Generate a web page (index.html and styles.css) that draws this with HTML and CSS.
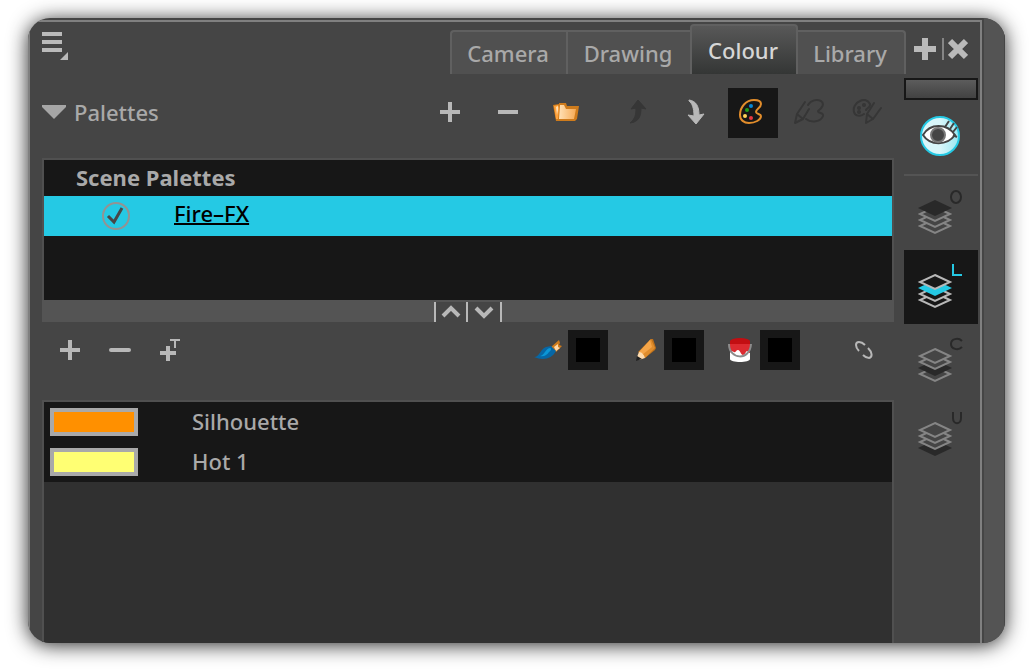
FILE: index.html
```html
<!DOCTYPE html>
<html lang="en">
<head>
  <meta charset="UTF-8">
  <meta name="viewport" content="width=device-width, initial-scale=1">
  <title>Colour</title>
  <link rel="stylesheet" href="styles.css">
</head>
<body>

<div class="window">
  <div class="dock">

    <header class="header">
      <button class="menu" aria-label="View menu">
        <svg width="26" height="28" viewBox="0 0 26 28"><path d="M0 0h20v4H0zM0 8h20v4H0zM0 16h20v4H0zM26 20v8h-8z" fill="#bababa"/></svg>
      </button>
      <nav class="tabs">
        <button class="tab">Camera</button>
        <button class="tab">Drawing</button>
        <button class="tab active">Colour</button>
        <button class="tab">Library</button>
      </nav>
      <div class="view-actions">
        <button aria-label="Add view">
          <svg width="22" height="22" viewBox="0 0 22 22"><path d="M11 0v22M0 11h22" stroke="#bababa" stroke-width="6"/></svg>
        </button>
        <button class="close" aria-label="Close view">
          <svg width="20" height="22" viewBox="0 0 20 22"><path d="M2 3l16 16M18 3L2 19" stroke="#bababa" stroke-width="6"/></svg>
        </button>
      </div>
    </header>

    <main class="main">
      <div class="toolbar">
        <button class="section-title">
          <svg width="24" height="14" viewBox="0 0 24 14"><path d="M0 0h24v2L12 14 0 2z" fill="#a6a6a6"/></svg>
          Palettes
        </button>
        <div class="tools">
          <button class="tool" aria-label="New palette">
            <svg width="22" height="22" viewBox="0 0 22 22"><path d="M11 1v20M1 11h20" stroke="#b8b8b8" stroke-width="4"/></svg>
          </button>
          <button class="tool" aria-label="Remove palette">
            <svg width="22" height="22" viewBox="0 0 22 22"><path d="M1 11h20" stroke="#b8b8b8" stroke-width="4"/></svg>
          </button>
          <button class="tool" aria-label="Palette list">
            <svg width="26" height="20" viewBox="0 0 26 20">
              <path d="M0 3l6-1v-1h7l1 3h12l-2 13-2 2H3z" fill="#ce7b1c"/>
              <path d="M1 4l4-1 1 3-1 11H3z" fill="#ffa33d"/>
              <path d="M3 5l2-1v4l-1 5z" fill="#ffe0b5"/>
              <path d="M7 3h4l2 4h10l-2 10H6z" fill="url(#folder)"/>
              <defs><linearGradient id="folder"><stop offset="0" stop-color="#ffe0b5"/><stop offset="1" stop-color="#f6aa55"/></linearGradient></defs>
            </svg>
          </button>
        </div>
        <div class="tools">
          <button class="tool" aria-label="Move up">
            <svg width="20" height="26" viewBox="0 0 20 26"><path d="M11 1l8 9-5-1c0 8-2 14-11 15 5-4 6-8 6-15l-5 1z" fill="#363636" stroke="#363636" stroke-linejoin="round"/></svg>
          </button>
          <button class="tool" aria-label="Move down">
            <svg width="20" height="26" viewBox="0 0 20 26"><path d="M4 1c7 1 10 6 10 15l5-1-8 10-8-9 6 1c0-8-2-13-5-15z" fill="#b8b8b8" stroke="#b8b8b8" stroke-linejoin="round"/></svg>
          </button>
          <button class="tool on" aria-label="Show palettes">
            <svg width="26" height="26" viewBox="0 0 26 26">
              <path d="M16 1C8 1 2 8 2 16c0 5 4 8 9 8 6 0 12-3 12-7 0-2-5-2-5-4 0-3 5-4 5-8 0-3-4-4-7-4z" fill="none" stroke="#e28d2b" stroke-width="2"/>
              <circle cx="13" cy="7" r="2" fill="#0788d8"/><circle cx="9" cy="11" r="2" fill="#219c18"/><circle cx="7" cy="17" r="2" fill="#ffd357"/><circle cx="13" cy="19" r="2" fill="#e8373f"/>
            </svg>
          </button>
          <button class="tool faded" aria-label="Edit palette">
            <svg width="32" height="26" viewBox="0 0 32 26">
              <path d="M12 3L4 15 2 24l8-4 6-10M4 15l6 5"/>
              <path d="M15 6c3-5 9-6 13-4 4 3 1 7-3 10 0 3 6 1 5 5-2 6-12 7-17 3"/>
            </svg>
          </button>
          <button class="tool faded" aria-label="Paint palette">
            <svg width="30" height="26" viewBox="0 0 30 26">
              <path d="M18 5c-2-4-6-5-10-3C3 4 1 9 2 13c1 4 6 5 10 2M18 5c1 3-3 4-4 6"/>
              <path d="M22 4l-7 11-1 9 7-4 8-11M15 15l6 5"/>
              <circle cx="7" cy="9" r="1"/><circle cx="12" cy="6" r="1"/><circle cx="7" cy="13" r="1"/>
            </svg>
          </button>
        </div>
      </div>

      <section class="palettes">
        <h2>Scene Palettes</h2>
        <label class="palette">
          <span class="check">
            <input type="checkbox" checked>
            <svg width="28" height="28" viewBox="0 0 28 28"><path d="M6 14l6 6 8-14" fill="none" stroke="#474747" stroke-width="3"/></svg>
          </span>
          <span class="palette-name">Fire–FX</span>
        </label>
      </section>

      <div class="splitter">
        <button aria-label="Collapse up"><svg width="20" height="20" viewBox="0 0 20 20"><path d="M2 14l8-8 8 8" fill="none" stroke="#b8b8b8" stroke-width="4"/></svg></button>
        <button aria-label="Collapse down"><svg width="20" height="20" viewBox="0 0 20 20"><path d="M2 6l8 8 8-8" fill="none" stroke="#b8b8b8" stroke-width="4"/></svg></button>
      </div>

      <div class="toolbar colour-bar">
        <div class="tools edit">
          <button class="tool" aria-label="Add colour">
            <svg width="22" height="22" viewBox="0 0 22 22"><path d="M11 1v20M1 11h20" stroke="#b8b8b8" stroke-width="4"/></svg>
          </button>
          <button class="tool" aria-label="Remove colour">
            <svg width="22" height="22" viewBox="0 0 22 22"><path d="M2 11h18" stroke="#b8b8b8" stroke-width="4" stroke-linecap="round"/></svg>
          </button>
          <button class="tool" aria-label="Add texture">
            <svg width="22" height="24" viewBox="0 0 22 24" fill="none" stroke="#b8b8b8"><path d="M9 8v15M1 15h16" stroke-width="4"/><path d="M11 2h10M16 2v8" stroke-width="2"/></svg>
          </button>
        </div>
        <div class="slots">
          <div class="slot">
            <button aria-label="Brush">
              <svg width="28" height="20" viewBox="0 0 28 20">
                <path d="M17 7l8-7 1 3-1 2 3 1-6 6z" fill="#ce7b1c"/><path d="M20 7l4-3v3l2 1-4 3z" fill="#ffd9a8"/>
                <path d="M0 17c6 0 6-8 12-10l5-1 5 5C18 19 9 21 0 17z" fill="#0767a5"/><path d="M6 16c5-1 5-7 10-8 2 0 1 3-1 4-2 3-5 5-9 4z" fill="#0b96d6"/>
              </svg>
            </button>
            <button class="swatch" aria-label="Brush colour"></button>
          </div>
          <div class="slot">
            <button class="pencil" aria-label="Pencil">
              <svg width="20" height="22" viewBox="0 0 20 22">
                <path d="M15 0h2l3 9-1 2-10 8-7-6z" fill="#bd701a"/><path d="M15 0l4 9-10 10-6-6z" fill="#e08d2d"/><path d="M14 1l2 7-10 8-3-3z" fill="#f5a548"/>
                <path d="M3 13c3 0 5 3 6 6l-6 2-2-3z" fill="#ffdcae"/><path d="M1 17l5 3-6 2z" fill="#222"/>
              </svg>
            </button>
            <button class="swatch" aria-label="Pencil colour"></button>
          </div>
          <div class="slot">
            <button aria-label="Paint">
              <svg width="24" height="26" viewBox="0 0 24 26">
                <path d="M2 12h20v10c0 4-20 4-20 0z" fill="#fff"/>
                <path d="M2 4h20v12c-2 0-2-2-3-2s-2 4-4 4-3-5-5-5-2 3-4 2-3-1-4 1z" fill="#dc2a30"/>
                <ellipse cx="12" cy="4" rx="10" ry="3" fill="#c20e12"/><path d="M2 4h20v3H2z" fill="#c20e12"/>
                <path d="M1 7c0 16 21 17 22 0" fill="none" stroke="#8c8c8c" stroke-width="2"/>
              </svg>
            </button>
            <button class="swatch" aria-label="Paint colour"></button>
          </div>
          <button class="tool" aria-label="Link colours">
            <svg width="18" height="18" viewBox="0 0 18 18" fill="none" stroke="#b8b8b8" stroke-width="2"><path d="M4 10C0 6 0 1 4 1c3 0 4 1 6 3M8 14c2 2 4 3 6 3 4-1 3-6-1-10"/></svg>
          </button>
        </div>
      </div>

      <ul class="colours">
        <li><span class="chip silhouette"></span><span class="colour-name">Silhouette</span></li>
        <li><span class="chip hot"></span><span class="colour-name">Hot 1</span></li>
      </ul>
    </main>

    <aside class="side">
      <div class="grip"></div>
      <button class="eye" aria-label="Preview">
        <svg width="42" height="42" viewBox="0 0 42 42">
          <defs><linearGradient id="lens"><stop offset="0.5" stop-color="#d9f6fa"/><stop offset="1" stop-color="#9be6f1"/></linearGradient></defs>
          <circle cx="21" cy="21" r="19" fill="url(#lens)" stroke="#25c9e4" stroke-width="2"/>
          <path d="M4 20c7-12 24-12 32 0-8 11-25 11-32 0z" fill="#fff" stroke="#454545" stroke-width="2"/>
          <circle cx="19" cy="20" r="7" fill="#454545" stroke="#777" stroke-width="2"/>
          <path d="M26 12l4-6M31 14l4-6M34 17l4-5M34 20l4 2" stroke="#454545" stroke-width="2"/>
        </svg>
      </button>
      <button class="layer" aria-label="Overlay">
        <svg width="74" height="74" viewBox="0 0 74 74">
          <path d="M31 43l15 7-15 7-15-7z"/><path d="M31 37l15 7-15 7-15-7z"/><path d="M31 31l15 7-15 7-15-7z"/><path class="mark" d="M31 24l17 8-17 8-17-8z"/>
          <ellipse class="letter" cx="52" cy="21" rx="5" ry="6"/>
        </svg>
      </button>
      <button class="layer on" aria-label="Line art">
        <svg width="74" height="74" viewBox="0 0 74 74">
          <path d="M31 43l15 7-15 7-15-7z"/><path d="M31 37l15 7-15 7-15-7z"/><path class="mark" d="M31 30l17 8-17 8-17-8z"/><path d="M31 25l15 7-15 7-15-7z"/>
          <path class="letter" d="M49 14v11h9"/>
        </svg>
      </button>
      <button class="layer" aria-label="Colour art">
        <svg width="74" height="74" viewBox="0 0 74 74">
          <path d="M31 43l15 7-15 7-15-7z"/><path class="mark" d="M31 36l17 8-17 8-17-8z"/><path d="M31 31l15 7-15 7-15-7z"/><path d="M31 25l15 7-15 7-15-7z"/>
          <path class="letter" d="M58 17c-4-4-11-2-11 3s7 7 11 3"/>
        </svg>
      </button>
      <button class="layer" aria-label="Underlay">
        <svg width="74" height="74" viewBox="0 0 74 74">
          <path class="mark" d="M31 42l17 8-17 8-17-8z"/><path d="M31 37l15 7-15 7-15-7z"/><path d="M31 31l15 7-15 7-15-7z"/><path d="M31 25l15 7-15 7-15-7z"/>
          <path class="letter" d="M49 14v6c0 7 8 7 8 0v-6"/>
        </svg>
      </button>
    </aside>

  </div>
  <div class="edge"></div>
</div>

</body>
</html>
```
FILE: styles.css
```css
* { box-sizing: border-box; }
body {
  margin: 0;
  min-height: 100vh;
  padding: 18px 30px 26px 28px;
  display: flex;
  background: #fff;
  color: #a9a9a9;
  font-family: "Noto Sans", sans-serif;
  font-size: 22px;
  font-weight: 500;
  line-height: 28px;
}
button {
  padding: 0;
  border: none;
  background: none;
  color: inherit;
  font: inherit;
  display: flex;
  align-items: center;
  justify-content: center;
  cursor: pointer;
}
svg { display: block; }

.window {
  flex: 1;
  display: flex;
  gap: 2px;
  padding-top: 2px;
  border-radius: 22px;
  overflow: hidden;
  background: #454545;
  box-shadow: 0 2px 20px rgba(0, 0, 0, 0.85);
}
.dock {
  flex: 1;
  display: grid;
  grid-template-columns: 1fr 74px;
  grid-template-rows: 52px 1fr;
  column-gap: 10px;
  padding: 0 2px 0 12px;
  border: 2px solid #808080;
  border-bottom: none;
}
.edge {
  width: 21px;
  margin-top: -2px;
  background: #545454;
  border-right: 1px solid #454545;
}

/* header */
.header {
  grid-column: 1 / 3;
  display: flex;
  align-items: flex-end;
}
.menu {
  align-self: flex-start;
  margin-top: 10px;
  margin-right: auto;
}
.tabs {
  display: flex;
  align-items: flex-end;
}
.tab {
  width: 108px;
  height: 44px;
  padding-right: 2px;
  border: 2px solid #606060;
  border-width: 2px 0 0 2px;
  background: #505050;
}
.tab:first-child {
  width: 116px;
  border-top-left-radius: 4px;
}
.tab:nth-child(2) { width: 124px; }
.tab:last-child {
  border-left: none;
  border-right-width: 2px;
  border-top-right-radius: 4px;
}
.tab.active {
  height: 50px;
  border-right-width: 2px;
  border-radius: 4px 4px 0 0;
  background: linear-gradient(#585858, #343635);
  color: #d6d6d6;
}
.view-actions {
  display: flex;
  gap: 6px;
  margin: 0 10px 14px 8px;
}
.close {
  padding-left: 4px;
  border-left: 2px solid #858585;
}

/* toolbars */
.toolbar {
  display: flex;
  align-items: center;
  height: 84px;
  padding: 14px 0 20px;
}
.section-title {
  gap: 8px;
  margin-right: auto;
  padding-bottom: 2px;
}
.tools {
  display: flex;
  gap: 8px;
  margin-left: 21px;
}
.tool {
  width: 50px;
  height: 50px;
  padding-bottom: 2px;
}
.tool.on {
  background: #171717;
  padding-right: 4px;
}
.faded { padding-right: 4px; }
.faded svg {
  fill: none;
  stroke: #363636;
  stroke-width: 2px;
  stroke-linecap: round;
  stroke-linejoin: round;
}
.colour-bar {
  height: 78px;
  padding: 3px 5px 25px 3px;
  justify-content: space-between;
}
.colour-bar .tool { padding-bottom: 0; }
.edit {
  gap: 0;
  margin-left: 0;
}
.slots {
  display: flex;
  align-items: center;
  gap: 16px;
}
.slots .tool { margin-left: 23px; }
.slot {
  display: grid;
  grid-template-columns: 40px 40px;
}
.pencil { padding-left: 4px; }
.swatch {
  height: 40px;
  border: 8px solid #171717;
  background: #000;
}

/* palette list */
.palettes {
  height: 142px;
  border: 2px solid #505050;
  border-bottom: none;
  background: #171717;
}
.palettes h2 {
  height: 36px;
  margin: 0;
  padding-left: 32px;
  font-size: 22px;
  line-height: 34px;
}
.palette {
  display: flex;
  align-items: center;
  gap: 44px;
  height: 40px;
  padding-left: 58px;
  background: #25c9e4;
  color: #000;
}
.palette-name {
  padding-bottom: 6px;
  text-decoration: underline;
  text-decoration-thickness: 2px;
}
.check {
  position: relative;
  width: 28px;
  height: 28px;
}
.check input {
  appearance: none;
  width: 28px;
  height: 28px;
  margin: 0;
  border: 2px solid #939393;
  border-radius: 50%;
}
.check svg {
  position: absolute;
  inset: 0;
  pointer-events: none;
}
.check input:not(:checked) + svg { display: none; }

.splitter {
  display: flex;
  justify-content: center;
  height: 22px;
  padding-top: 2px;
  background: #545454;
}
.splitter button {
  width: 32px;
  border-left: 2px solid #b8b8b8;
  background: #454545;
}
.splitter button:last-child {
  width: 36px;
  border-right: 2px solid #b8b8b8;
}

/* colour list */
.main {
  display: flex;
  flex-direction: column;
}
.colours {
  flex: 1;
  margin: 0;
  padding: 0;
  list-style: none;
  border: 2px solid #505050;
  border-bottom: none;
  background: #303030;
}
.colours li {
  display: flex;
  align-items: center;
  gap: 54px;
  height: 40px;
  padding-left: 6px;
  background: #171717;
}
.colour-name { padding-bottom: 2px; }
.chip {
  width: 88px;
  height: 28px;
  border: 4px solid #a9a9a9;
}
.silhouette { background: #ff9000; }
.hot { background: #ffff73; }

/* side bar */
.side { padding-top: 4px; }
.grip {
  height: 22px;
  border: 2px solid #171717;
  background: linear-gradient(#5c5c5c, #424242);
}
.eye {
  width: 100%;
  height: 76px;
  padding-right: 2px;
  padding-bottom: 2px;
  border-bottom: 2px solid #545454;
}
.layer path {
  fill: #454545;
  stroke: #858585;
  stroke-width: 2px;
}
.layer .mark {
  fill: #292929;
  stroke: none;
}
.layer .letter {
  fill: none;
  stroke: #292929;
  stroke-width: 2px;
}
.layer.on { background: #171717; }
.layer.on path {
  fill: #171717;
  stroke: #b8b8b8;
}
.layer.on .mark {
  fill: #25c9e4;
  stroke: none;
}
.layer.on .letter {
  fill: none;
  stroke: #25c9e4;
}
```
